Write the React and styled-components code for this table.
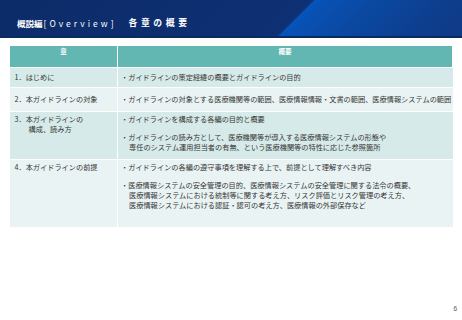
import React from 'react';
import styled, { createGlobalStyle } from 'styled-components';

const GlobalStyle = createGlobalStyle`
    html, body {
        margin: 0;
        padding: 0;
        background: #ffffff;
    }
    body {
        font-family: "Noto Sans CJK JP", "Noto Sans", sans-serif;
    }
`;

const rows = [
    {
        chapter: ['1．はじめに'],
        height: 20,
        align: 'middle',
        items: [['・ガイドラインの策定経緯の概要とガイドラインの目的']],
        tint: 'dark',
    },
    {
        chapter: ['2．本ガイドラインの対象'],
        height: 24,
        align: 'middle',
        items: [['・ガイドラインの対象とする医療機関等の範囲、医療情報情報・文書の範囲、医療情報システムの範囲']],
        tint: 'light',
    },
    {
        chapter: ['3．本ガイドラインの', '構成、読み方'],
        height: 48,
        align: 'top',
        items: [
            ['・ガイドラインを構成する各編の目的と概要'],
            [
                '・ガイドラインの読み方として、医療機関等が導入する医療情報システムの形態や',
                '専任のシステム運用担当者の有無、という医療機関等の特性に応じた参照箇所',
            ],
        ],
        tint: 'dark',
    },
    {
        chapter: ['4．本ガイドラインの前提'],
        height: 68,
        align: 'top',
        items: [
            ['・ガイドラインの各編の遵守事項を理解する上で、前提として理解すべき内容'],
            [
                '・医療情報システムの安全管理の目的、医療情報システムの安全管理に関する法令の概要、',
                '医療情報システムにおける統制等に関する考え方、リスク評価とリスク管理の考え方、',
                '医療情報システムにおける認証・認可の考え方、医療情報の外部保存など',
            ],
        ],
        tint: 'light',
    },
];

export default function App() {
    return (
        <Page>
            <GlobalStyle />
            <Header>
                <TitleMain>概説編</TitleMain>
                <TitleTag>[Overview]</TitleTag>
                <TitleSub>各章の概要</TitleSub>
            </Header>
            <Body>
                <Table>
                    <colgroup>
                        <col style={{ width: '108px' }} />
                        <col />
                    </colgroup>
                    <thead>
                        <tr>
                            <HeadCell>章</HeadCell>
                            <HeadCell>概要</HeadCell>
                        </tr>
                    </thead>
                    <tbody>
                        {rows.map((row, i) => (
                            <Row key={i} $h={row.height} $tint={row.tint}>
                                <ChapterCell $align={row.align}>
                                    {row.chapter.map((line, j) => (
                                        <Line key={j} $indent={j > 0 ? 14 : 0}>{line}</Line>
                                    ))}
                                </ChapterCell>
                                <SummaryCell $align={row.align}>
                                    {row.items.map((item, j) => (
                                        <Item key={j}>
                                            {item.map((line, k) => (
                                                <Line key={k} $indent={k > 0 ? 8 : 0}>{line}</Line>
                                            ))}
                                        </Item>
                                    ))}
                                </SummaryCell>
                            </Row>
                        ))}
                    </tbody>
                </Table>
            </Body>
            <Footer>6</Footer>
        </Page>
    );
}

const Page = styled.div`
    width: 462px;
    height: 320px;
    display: flex;
    flex-direction: column;
    overflow: hidden;
    background: #ffffff;
`;

const Header = styled.div`
    display: flex;
    align-items: flex-end;
    height: 28px;
    padding: 0 0 8px 17px;
    border-bottom: 2px solid #0a2a62;
    background: linear-gradient(
        135deg,
        #0c2b68 0%,
        #0e3074 62.8%,
        #0753b8 63.4%,
        #0a4aa4 74%,
        #0d3f90 88%,
        #103a86 100%
    );
    color: #ffffff;
    white-space: nowrap;
`;

const TitleMain = styled.span`
    font-size: 8.5px;
    font-weight: 700;
    line-height: 10px;
`;

const TitleTag = styled.span`
    font-size: 8.5px;
    font-weight: 400;
    letter-spacing: 3px;
    line-height: 10px;
    margin-left: 1px;
`;

const TitleSub = styled.span`
    font-size: 8.8px;
    font-weight: 700;
    letter-spacing: 3.6px;
    line-height: 10px;
    margin-left: 12px;
`;

const Body = styled.div`
    flex: 1;
    padding: 8px 9px 0 9px;
`;

const Table = styled.table`
    width: 444px;
    border-collapse: collapse;
    table-layout: fixed;
    font-size: 7.2px;
    color: #363636;
`;

const HeadCell = styled.th`
    height: 20px;
    padding: 1px 0 0 0;
    vertical-align: top;
    background: #62b7b3;
    color: #ffffff;
    font-weight: 700;
    font-size: 6.5px;
    line-height: 9px;
    text-align: center;
    border: 1px solid #ffffff;
    border-top: none;
`;

const Row = styled.tr`
    height: ${(p) => p.$h}px;
    background: ${(p) => (p.$tint === 'dark' ? '#d6eae9' : '#e9f3f3')};
`;

const ChapterCell = styled.td`
    vertical-align: ${(p) => p.$align};
    padding: ${(p) => (p.$align === 'top' ? '2px 0 0 5px' : '0 0 1px 5px')};
    border: 1px solid #ffffff;
    border-left: none;
`;

const SummaryCell = styled.td`
    vertical-align: ${(p) => p.$align};
    padding: ${(p) => (p.$align === 'top' ? '2px 0 0 3px' : '0 0 1px 3px')};
    border: 1px solid #ffffff;
    border-right: none;
    white-space: nowrap;
`;

const Item = styled.div`
    & + & {
        margin-top: 8px;
    }
`;

const Line = styled.div`
    line-height: 10px;
    padding-left: ${(p) => p.$indent}px;
`;

const Footer = styled.div`
    display: flex;
    justify-content: flex-end;
    padding: 0 5px 8px 0;
    font-size: 6.5px;
    color: #555555;
    font-family: "Liberation Sans", sans-serif;
`;
